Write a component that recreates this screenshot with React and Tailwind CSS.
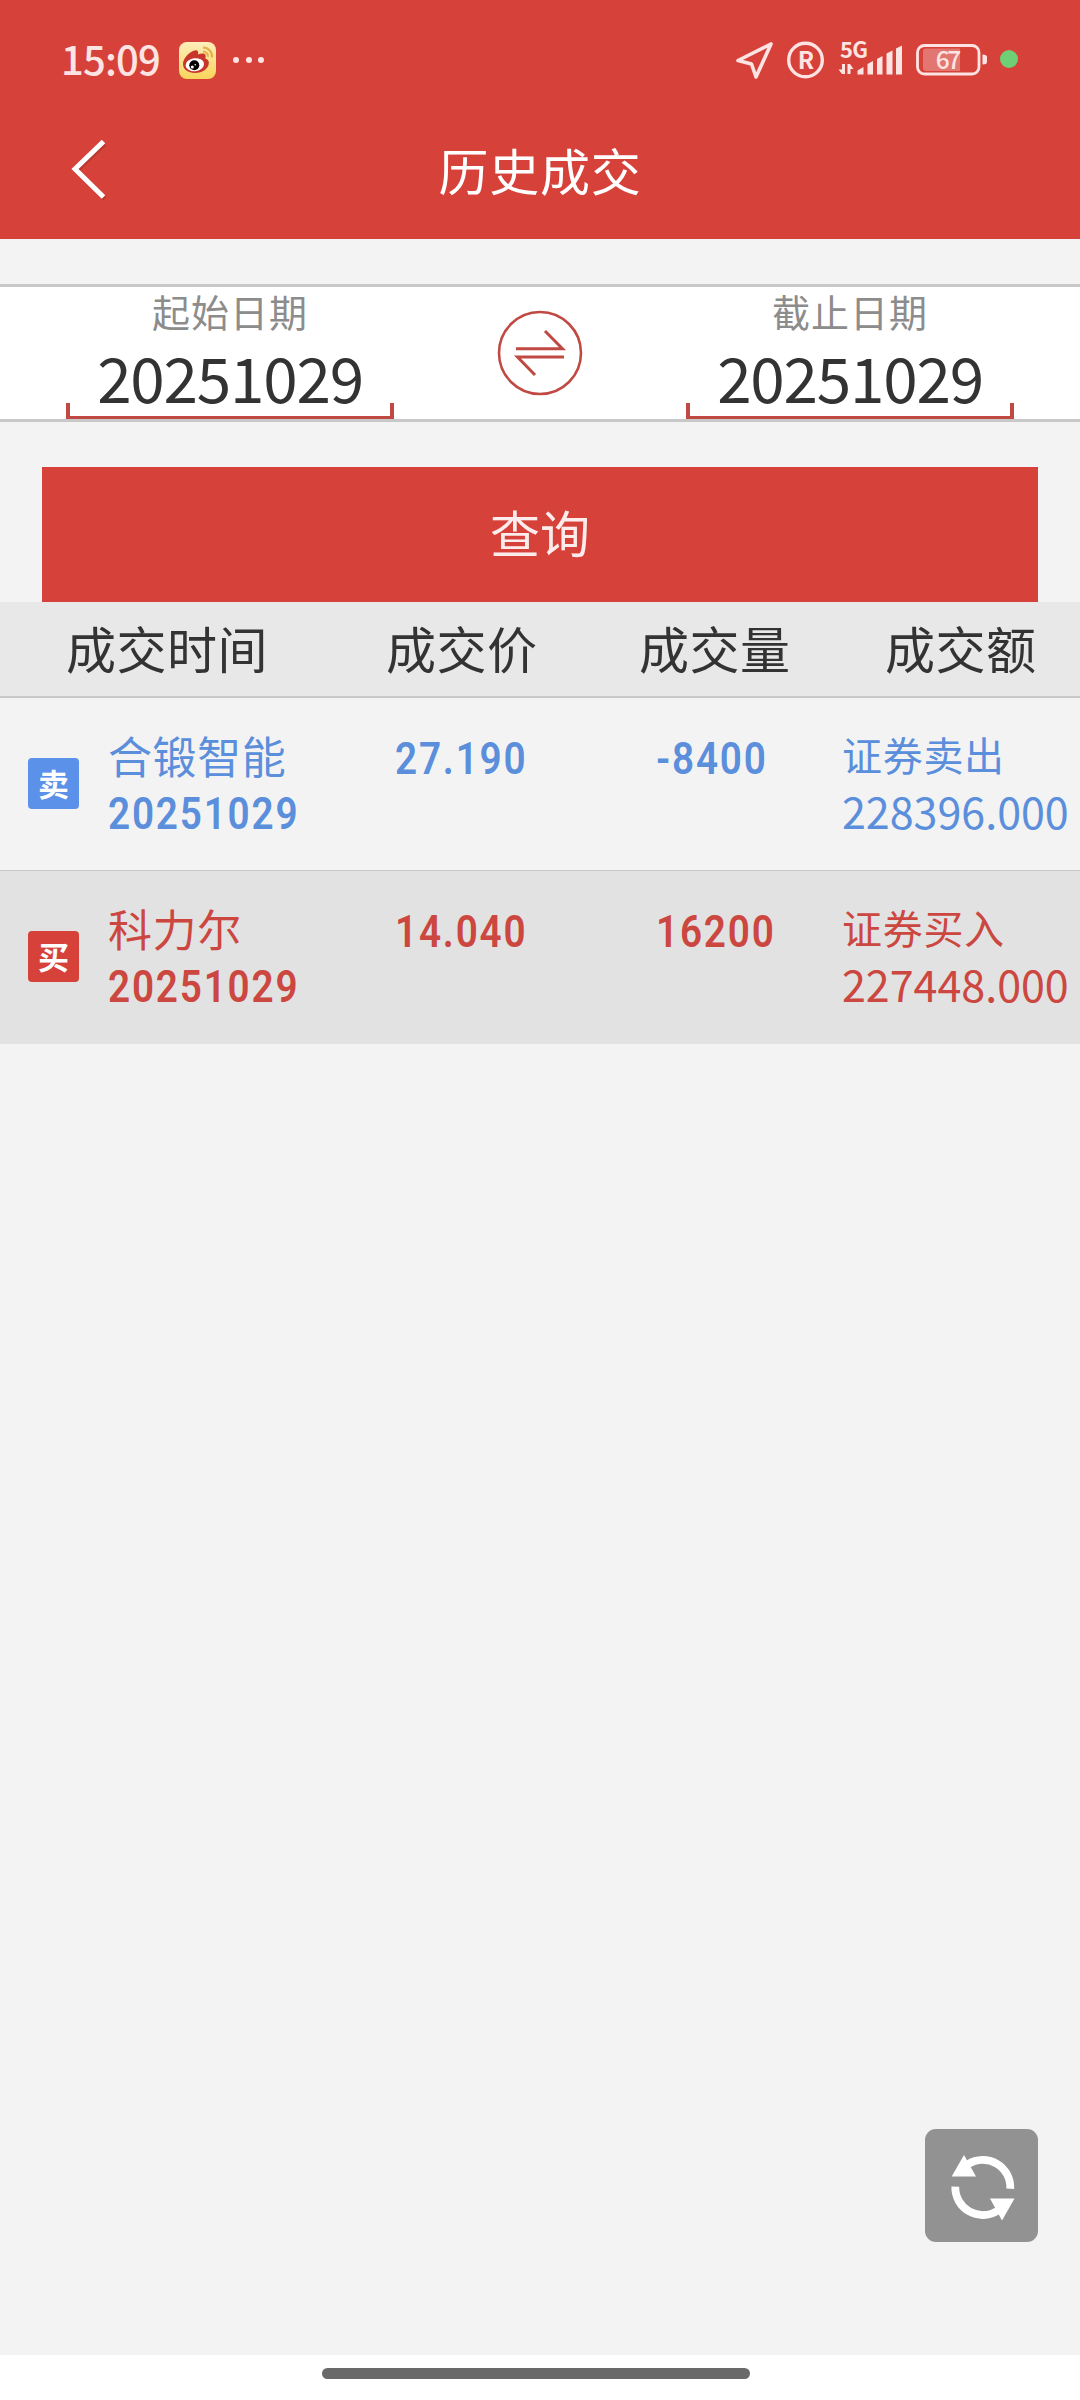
import { useState } from 'react';

const trades = [
  {
    side: 'sell',
    tag: '卖',
    name: '合锻智能',
    date: '20251029',
    price: '27.190',
    volume: '-8400',
    type: '证券卖出',
    amount: '228396.000',
  },
  {
    side: 'buy',
    tag: '买',
    name: '科力尔',
    date: '20251029',
    price: '14.040',
    volume: '16200',
    type: '证券买入',
    amount: '227448.000',
  },
];

function WeiboIcon() {
  return (
    <svg className="ml-[20px] mt-[42px] h-[37px] w-[37px] shrink-0" viewBox="0 0 37 37">
      <defs>
        <linearGradient id="weiboBg" x1="0" y1="0" x2="0" y2="1">
          <stop offset="0" stopColor="#fdeebb" />
          <stop offset="1" stopColor="#f9d45c" />
        </linearGradient>
      </defs>
      <rect width="37" height="37" rx="8" fill="url(#weiboBg)" />
      <path
        d="M4 22C4 17 9 11 14 9C18 7 20 9 19 12.500C22 11 26 11 26.500 13C27 15 26 16 26.500 16.500C29.500 17.500 30.500 20 29.500 23C28 28 22 31 16 31C9 31 4 27.500 4 22Z"
        fill="#c8352b"
      />
      <ellipse cx="15.800" cy="22.700" rx="9.300" ry="6.500" fill="#fff" transform="rotate(-7 15.800 22.700)" />
      <circle cx="15.300" cy="23.300" r="5" fill="#000" />
      <circle cx="13.300" cy="25" r="1.500" fill="#fff" />
      <circle cx="16.200" cy="22.800" r="0.800" fill="#fff" />
      <path d="M24 5.500A9 9 0 0 1 33 15.500" fill="none" stroke="#e5b04c" strokeWidth="2.200" />
      <path d="M24 9.500A5 5 0 0 1 29 14.800" fill="none" stroke="#e5b04c" strokeWidth="2.200" />
    </svg>
  );
}

function StatusIcons() {
  return (
    <svg className="ml-auto h-[119px] w-[344px] shrink-0" viewBox="736 0 344 119">
      <path
        d="M771 44L756 77L751.500 64L738 60.500Z"
        fill="none"
        stroke="#fde4e2"
        strokeWidth="3.600"
        strokeLinejoin="round"
      />
      <circle cx="805.500" cy="60" r="16.800" fill="none" stroke="#fde4e2" strokeWidth="3.400" />
      <text x="806" y="68.500" textAnchor="middle" fontSize="24" fontWeight="700" fill="#fde4e2" className="font-['Noto_Sans_CJK_SC',sans-serif]">
        R
      </text>
      <text x="840" y="57.500" fontSize="22" fontWeight="700" textLength="28" fill="#fde4e2" className="font-['Noto_Sans_CJK_SC',sans-serif]">
        5G
      </text>
      <g fill="#fde4e2">
        <path d="M842 64H845V74H842L838.500 69.500H842Z" />
        <path d="M847.500 64H850L853.500 69H850.500V74H847.500Z" />
        <path d="M857.500 70.500L863.500 67V74.500H857.500Z" />
        <path d="M867.500 64L873 61V74.500H867.500Z" />
        <path d="M877 59L882.500 56V74.500H877Z" />
        <path d="M886.500 53.500L892.500 50.500V74.500H886.500Z" />
        <path d="M896 48.500L902 45.500V74.500H896Z" />
      </g>
      <rect x="917.500" y="45.500" width="61.500" height="28.500" rx="7" fill="none" stroke="#fde4e2" strokeWidth="2.800" />
      <path d="M926 48.500H960V71H926Q923 71 923 68V51.500Q923 48.500 926 48.500Z" fill="#e27670" />
      <text x="948.500" y="68.800" textAnchor="middle" fontSize="24.500" fontWeight="500" textLength="25.500" fill="#fde4e2" className="font-['Noto_Sans_CJK_SC',sans-serif]">
        67
      </text>
      <path d="M982.500 54.500Q987 54.500 987 57V62Q987 64.500 982.500 64.500Z" fill="#fde4e2" />
      <circle cx="1009" cy="59" r="9" fill="#6fcf74" />
    </svg>
  );
}

function StatusBar() {
  return (
    <div className="flex h-[119px] items-start">
      <span className="ml-[61px] mt-[28px] w-[98px] whitespace-nowrap text-[40px] font-medium leading-[60px] tracking-[-0.800px] text-[#fde4e2]">
        15:09
      </span>
      <WeiboIcon />
      <div className="ml-[17px] mt-[57px] flex gap-[6.500px]">
        <i className="h-[6px] w-[6px] rounded-full bg-[#fde4e2]" />
        <i className="h-[6px] w-[6px] rounded-full bg-[#fde4e2]" />
        <i className="h-[6px] w-[6px] rounded-full bg-[#fde4e2]" />
      </div>
      <StatusIcons />
    </div>
  );
}

function DateField({ label, value }) {
  return (
    <div className="flex w-[328px] flex-col items-center">
      <span className="h-[50px] whitespace-nowrap text-[38px] leading-[48px] tracking-[1px] text-[#8c8c8c]">{label}</span>
      <span className="h-[66px] whitespace-nowrap text-[62px] leading-[78px] tracking-[-1.200px] text-[#333]">{value}</span>
      <div className="h-[16px] w-full border-x-4 border-b-[3px] border-[#c04a43]" />
    </div>
  );
}

// narrow bold digits used for date, price and volume
function Digits({ children }) {
  return (
    <span className="inline-block origin-left scale-x-[0.86] whitespace-nowrap font-[Roboto,sans-serif] text-[45px] font-semibold tracking-[2.100px]">
      {children}
    </span>
  );
}

function TradeRow({ trade }) {
  const sell = trade.side === 'sell';
  return (
    <div
      className={`grid h-[173px] grid-cols-[108px_269px_262px_203px_238px] ${
        sell ? 'border-b border-[#c8c8c8] bg-[#f3f3f3] text-[#5b8edb]' : 'bg-[#e2e2e2] text-[#cb473f]'
      }`}
    >
      <div
        className={`ml-[28px] mt-[60px] flex h-[51px] w-[51px] items-center justify-center rounded-[4px] pb-[2px] text-[31px] font-bold leading-[46px] text-white ${
          sell ? 'bg-[#5b91e8]' : 'bg-[#d6413a]'
        }`}
      >
        {trade.tag}
      </div>
      <div className="pt-[27px]">
        <p className="h-[60px] text-[44px] leading-[60px] tracking-[0.600px]">{trade.name}</p>
        <div className="flex h-[58px] items-center leading-[56px]">
          <Digits>{trade.date}</Digits>
        </div>
      </div>
      <div className="flex h-[122px] items-center pl-[18px] leading-[60px]">
        <Digits>{trade.price}</Digits>
      </div>
      <div className="flex h-[122px] items-center pl-[17px] leading-[60px]">
        <Digits>{trade.volume}</Digits>
      </div>
      <div className="whitespace-nowrap pt-[27px]">
        <p className="text-[40px] leading-[58px] tracking-[0.700px]">{trade.type}</p>
        <p className="text-[43px] leading-[54px]">{trade.amount}</p>
      </div>
    </div>
  );
}

export default function App() {
  const [start, setStart] = useState('20251029');
  const [end, setEnd] = useState('20251029');

  const swapDates = () => {
    setStart(end);
    setEnd(start);
  };

  return (
    <div className="flex h-[2400px] w-[1080px] flex-col overflow-hidden bg-[#f3f3f3] font-['Noto_Sans_CJK_SC',sans-serif]">
      <header className="h-[239px] shrink-0 bg-[#d6413a]">
        <StatusBar />
        <div className="grid h-[120px] grid-cols-[200px_1fr_200px] items-start">
          <svg className="ml-[70px] mt-[18px] h-[64px] w-[40px]" viewBox="0 0 40 64">
            <path d="M33.500 6L5.500 33L33.500 61" transform="translate(1 1)" fill="none" stroke="#a8322c" strokeWidth="4.500" opacity="0.600" />
            <path d="M33.500 4.500L5 32L33.500 60" fill="none" stroke="#fff" strokeWidth="5" />
          </svg>
          <h1 className="pt-[14px] text-center text-[50px] leading-[72px] tracking-[0.700px] text-white">历史成交</h1>
        </div>
      </header>

      <section className="mt-[45px] flex h-[138px] shrink-0 border-y-[3px] border-[#c8c8c8] bg-white pl-[66px]">
        <DateField label="起始日期" value={start} />
        <button onClick={swapDates} className="flex w-[292px] items-start justify-center pt-[23px]">
          <svg className="h-[86px] w-[86px]" viewBox="0 0 86 86" fill="none" stroke="#c04a43">
            <circle cx="43" cy="43" r="41" strokeWidth="2.600" />
            <path d="M19 38.700H65.500L48 21M67 47H20.500L38 65" strokeWidth="3" />
          </svg>
        </button>
        <DateField label="截止日期" value={end} />
      </section>

      <button className="mx-[42px] mt-[45px] h-[135px] shrink-0 bg-[#d6413a] pb-[7px] text-[50px] leading-[72px] text-[#fdeceb]">
        查询
      </button>

      <div className="grid h-[96px] shrink-0 grid-cols-[386px_253px_246px_195px] border-b-2 border-[#c8c8c8] bg-[#e8e8e8] text-[50px] leading-[90px] tracking-[0.500px] text-[#333]">
        <span className="pl-[66px]">成交时间</span>
        <span>成交价</span>
        <span>成交量</span>
        <span>成交额</span>
      </div>
      {trades.map((trade) => (
        <TradeRow key={trade.side} trade={trade} />
      ))}

      <div className="mt-auto flex shrink-0 justify-end pr-[42px] pb-[113px]">
        <button className="h-[113px] w-[113px] rounded-[11px] bg-[#929292]">
          <svg className="h-[113px] w-[113px]" viewBox="0 0 113 113">
            <path d="M43 35.300A27.500 27.500 0 0 1 85.300 59.700" fill="none" stroke="#fff" strokeWidth="7.800" />
            <path d="M30.300 57.700A27.500 27.500 0 0 0 72.600 81.700" fill="none" stroke="#fff" strokeWidth="7.800" />
            <path d="M39 26L51 47.500H26.700Z" fill="#fff" />
            <path d="M77 91.500L65 69.500H89.500Z" fill="#fff" />
          </svg>
        </button>
      </div>
      <footer className="flex h-[45px] shrink-0 justify-center bg-white pt-[13px]">
        <div className="mr-[8px] h-[11px] w-[428px] rounded-full bg-[#696969]" />
      </footer>
    </div>
  );
}
